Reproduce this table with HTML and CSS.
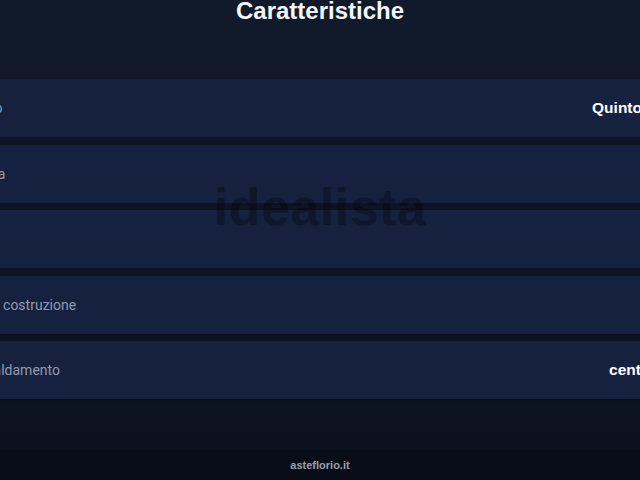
FILE: index.html
```html
<!DOCTYPE html>
<html lang="it">
<head>
<meta charset="utf-8">
<title>Caratteristiche</title>
<link rel="stylesheet" href="styles.css">
</head>
<body>
<div class="page">
  <header class="header">
    <h1 class="title">Caratteristiche</h1>
  </header>
  <section class="list">
    <div class="row"><span class="label">Piano</span><span class="value">Quinto</span></div>
    <div class="row"><span class="label">Spesa</span><span class="value"></span></div>
    <div class="row"><span class="label">Box</span><span class="value"></span></div>
    <div class="row"><span class="label">Anno costruzione</span><span class="value"></span></div>
    <div class="row"><span class="label">Riscaldamento</span><span class="value value--long">centralizzato</span></div>
  </section>
  <div class="spacer"></div>
  <footer class="footer">asteflorio.it</footer>
  <div class="watermark">idealista</div>
</div>
</body>
</html>
```

FILE: styles.css
```css
html, body {
  margin: 0;
  padding: 0;
}
body {
  width: 640px;
  height: 480px;
  overflow: hidden;
  background: linear-gradient(180deg, #111a2b 0%, #0f1727 40%, #0d1322 80%, #0b101c 100%);
  font-family: "Liberation Sans", Arial, sans-serif;
}
.page {
  position: relative;
  display: flex;
  flex-direction: column;
  height: 480px;
  overflow: hidden;
}
.header {
  height: 79px;
  flex: none;
}
.title {
  margin: 0;
  text-align: center;
  font-size: 24px;
  line-height: 21px;
  font-weight: 700;
  color: #f4f6fa;
}
.list {
  display: flex;
  flex-direction: column;
  gap: 7.5px;
  margin: 0 -18px 0 -49px;
  flex: none;
}
.row {
  height: 58px;
  display: flex;
  align-items: center;
  justify-content: space-between;
  padding: 0 16px;
  background: #16213f;
  box-shadow: 0 0 4px rgba(0, 0, 0, 0.35);
}
.label {
  font-family: Roboto, "Liberation Sans", sans-serif;
  font-size: 14px;
  color: #909bb0;
}
.value {
  font-size: 15.5px;
  font-weight: 700;
  color: #ffffff;
}
.value--long {
  margin-right: -61px;
}
.spacer {
  flex: 1;
}
.footer {
  height: 30px;
  flex: none;
  background: #090d17;
  color: #9aa1ae;
  font-size: 11px;
  font-weight: 700;
  text-align: center;
  line-height: 30px;
}
.watermark {
  position: absolute;
  left: 0;
  right: 0;
  top: 177px;
  text-align: center;
  font-family: "Liberation Sans", Arial, sans-serif;
  font-size: 52px;
  font-weight: 700;
  letter-spacing: 0.5px;
  color: rgba(0, 0, 0, 0.3);
  pointer-events: none;
}
```
